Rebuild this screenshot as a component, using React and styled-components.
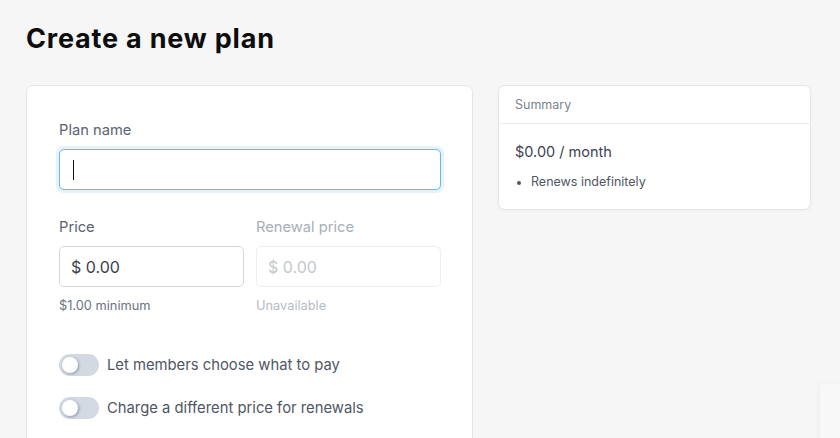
import React, { useState } from 'react';
import styled, { createGlobalStyle } from 'styled-components';

const GlobalStyle = createGlobalStyle`
    html, body {
        margin: 0;
        padding: 0;
        background: #f6f6f6;
        font-family: Inter, Lato, Arial, sans-serif;
        overflow: hidden;
    }
    * {
        box-sizing: border-box;
    }
`;

const Page = styled.div`
    padding: 20px 26px 0;
    height: 438px;
`;

const Heading = styled.h1`
    margin: 0 0 28px;
    font-size: 27px;
    line-height: 37px;
    font-weight: 700;
    color: #0d0d0d;
    letter-spacing: 0.8px;
`;

const Columns = styled.div`
    display: flex;
    align-items: flex-start;
    gap: 25px;
`;

const Card = styled.div`
    background: #fff;
    border: 1px solid #e3e6ec;
    border-radius: 7px;
`;

const FormCard = styled(Card)`
    width: 447px;
    height: 380px;
    padding: 34px 31px 0 32px;
`;

const Label = styled.div`
    font-size: 14.7px;
    line-height: 20px;
    color: ${(p) => (p.disabled ? '#a9aeb7' : '#5c6370')};
    margin-bottom: 9px;
`;

const TextInput = styled.div`
    height: 41px;
    border-radius: 5px;
    border: 1px solid ${(p) => (p.focused ? '#6ab5ea' : p.disabled ? '#eceef1' : '#d5d8de')};
    box-shadow: ${(p) => (p.focused ? '0 0 0 3px #e4f2fc' : 'none')};
    display: flex;
    align-items: center;
    padding: 0 11px;
    font-size: 16px;
    color: ${(p) => (p.disabled ? '#c3c7ce' : '#3a404c')};
    background: #fff;
`;

const Caret = styled.span`
    width: 1px;
    height: 20px;
    background: #111;
    margin-left: 2px;
`;

const Row = styled.div`
    display: grid;
    grid-template-columns: 1fr 1fr;
    gap: 12px;
    margin-top: 27px;
`;

const Hint = styled.div`
    margin-top: 10px;
    font-size: 12.8px;
    line-height: 18px;
    color: ${(p) => (p.disabled ? '#b7bbc3' : '#6b7280')};
`;

const Toggles = styled.div`
    margin-top: 39px;
    display: flex;
    flex-direction: column;
    gap: 21px;
`;

const ToggleRow = styled.label`
    display: flex;
    align-items: center;
    gap: 8px;
    font-size: 14.8px;
    color: #4f5664;
    cursor: pointer;
`;

const Track = styled.span`
    position: relative;
    width: 40px;
    height: 22px;
    border-radius: 11px;
    background: ${(p) => (p.on ? '#5cb85c' : '#d3d9e2')};
    flex-shrink: 0;
`;

const Knob = styled.span`
    position: absolute;
    top: 3px;
    left: ${(p) => (p.on ? '21px' : '3px')};
    width: 16px;
    height: 16px;
    border-radius: 50%;
    background: #fff;
    box-shadow: 1px 1px 3px rgba(60, 70, 90, 0.45);
`;

const SummaryCard = styled(Card)`
    width: 313px;
    height: 125px;
    box-shadow: 0 1px 3px rgba(0, 0, 0, 0.04);
`;

const SummaryHeader = styled.div`
    height: 38px;
    padding: 0 16px;
    display: flex;
    align-items: center;
    font-size: 12.5px;
    color: #7b8290;
    border-bottom: 1px solid #e9ecf0;
`;

const SummaryBody = styled.div`
    padding: 18px 16px 0;
`;

const Amount = styled.div`
    font-size: 14.5px;
    line-height: 20px;
    color: #3d4350;
`;

const Bullets = styled.ul`
    margin: 11px 0 0;
    padding: 0 0 0 16px;
    font-size: 12.5px;
    line-height: 18px;
    color: #4f5664;
    li::marker {
        font-size: 11px;
    }
`;

const Corner = styled.div`
    position: fixed;
    left: 820px;
    top: 384px;
    width: 40px;
    height: 80px;
    background: #f8f8f8;
    box-shadow: -2px 0 6px rgba(0, 0, 0, 0.03);
`;

const Toggle = ({ label }) => {
    const [on, setOn] = useState(false);
    return (
        <ToggleRow onClick={() => setOn(!on)}>
            <Track on={on ? 1 : 0}>
                <Knob on={on ? 1 : 0} />
            </Track>
            {label}
        </ToggleRow>
    );
};

const App = () => {
    return (
        <Page>
            <GlobalStyle />
            <Heading>Create a new plan</Heading>
            <Columns>
                <FormCard>
                    <Label>Plan name</Label>
                    <TextInput focused>
                        <Caret />
                    </TextInput>
                    <Row>
                        <div>
                            <Label>Price</Label>
                            <TextInput>$ 0.00</TextInput>
                            <Hint>$1.00 minimum</Hint>
                        </div>
                        <div>
                            <Label disabled>Renewal price</Label>
                            <TextInput disabled>$ 0.00</TextInput>
                            <Hint disabled>Unavailable</Hint>
                        </div>
                    </Row>
                    <Toggles>
                        <Toggle label="Let members choose what to pay" />
                        <Toggle label="Charge a different price for renewals" />
                    </Toggles>
                </FormCard>
                <SummaryCard>
                    <SummaryHeader>Summary</SummaryHeader>
                    <SummaryBody>
                        <Amount>$0.00 / month</Amount>
                        <Bullets>
                            <li>Renews indefinitely</li>
                        </Bullets>
                    </SummaryBody>
                </SummaryCard>
            </Columns>
            <Corner />
        </Page>
    );
};

export default App;
